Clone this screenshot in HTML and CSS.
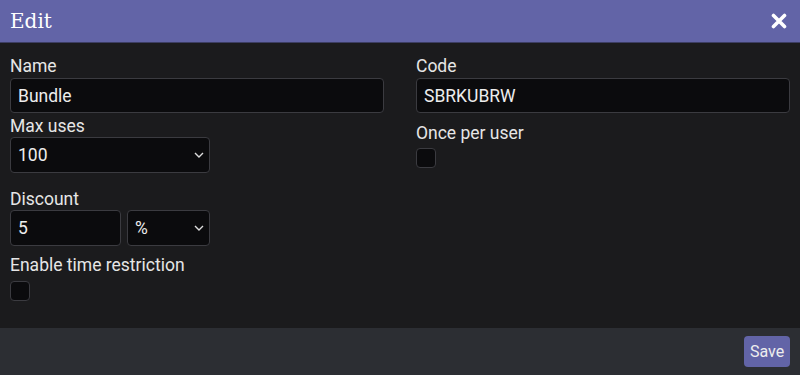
FILE: index.html
```
<!DOCTYPE html>
<html lang="en">
    <head>
        <meta charset="UTF-8" />
        <meta name="viewport" content="width=device-width, initial-scale=1.0" />
        <title>Edit</title>
        <link rel="stylesheet" href="styles.css">
    </head>
    <body>
        <!-- 모달 박스 -->
        <div class="modal">
            <!-- 헤더 -->
            <div class="modal-head">
                <h1 class="modal-tit">Edit</h1>
                <button class="close-btn" aria-label="close">
                    <svg width="16" height="16" viewBox="0 0 16 16">
                        <path d="M2.5 2.5 L13.5 13.5 M13.5 2.5 L2.5 13.5" stroke="#fff" stroke-width="3.6" stroke-linecap="round" />
                    </svg>
                </button>
            </div>

            <!-- 폼 본문 -->
            <div class="modal-body">
                <div class="col">
                    <label class="lbl lbl-first" for="name">Name</label>
                    <input class="fld" type="text" id="name" value="Bundle" />

                    <label class="lbl lbl-max" for="maxuse">Max uses</label>
                    <div class="sel-wrap sel-max">
                        <select class="fld sel" id="maxuse">
                            <option>100</option>
                        </select>
                        <svg class="chev" width="10" height="6" viewBox="0 0 10 6">
                            <path d="M1 1 L5 5 L9 1" fill="none" stroke="#ddd" stroke-width="1.4" />
                        </svg>
                    </div>

                    <label class="lbl lbl-disc" for="disc">Discount</label>
                    <div class="disc-row">
                        <input class="fld fld-disc" type="text" id="disc" value="5" />
                        <div class="sel-wrap sel-unit">
                            <select class="fld sel">
                                <option>%</option>
                            </select>
                            <svg class="chev" width="10" height="6" viewBox="0 0 10 6">
                                <path d="M1 1 L5 5 L9 1" fill="none" stroke="#ddd" stroke-width="1.4" />
                            </svg>
                        </div>
                    </div>

                    <label class="lbl lbl-time" for="timechk">Enable time restriction</label>
                    <input class="chk chk-time" type="checkbox" id="timechk" />
                </div>

                <div class="col">
                    <label class="lbl lbl-first" for="code">Code</label>
                    <input class="fld" type="text" id="code" value="SBRKUBRW" />

                    <label class="lbl lbl-once" for="once">Once per user</label>
                    <input class="chk chk-once" type="checkbox" id="once" />
                </div>
            </div>

            <!-- 푸터 -->
            <div class="modal-foot">
                <button class="save-btn">Save</button>
            </div>
        </div>
    </body>
</html>
```

FILE: styles.css
```
html,
body {
    margin: 0;
    height: 100%;
}
body {
    background-color: #1b1b1d;
    color: #e6e6e6;
    font-family: Roboto, "Noto Sans", sans-serif;
    font-size: 17.5px;
}
/* 모달 전체 */
.modal {
    display: flex;
    flex-direction: column;
    height: 100%;
}
/* 헤더 */
.modal-head {
    display: flex;
    align-items: center;
    justify-content: space-between;
    height: 42px;
    padding: 0 10px;
    background-color: #6264a7;
    border-bottom: 1px solid #3d3e63;
}
.modal-tit {
    margin: 0;
    font-family: "DejaVu Serif", "Liberation Serif", serif;
    font-weight: normal;
    font-size: 20px;
    color: #fff;
}
.close-btn {
    display: flex;
    padding: 0;
    margin-right: 3px;
    border: 0;
    background: none;
}
/* 본문 */
.modal-body {
    flex: 1;
    display: grid;
    grid-template-columns: 1fr 1fr;
    column-gap: 32px;
    padding: 0 10px;
}
.col {
    display: flex;
    flex-direction: column;
    align-items: flex-start;
}
.lbl {
    display: block;
    line-height: 21px;
}
.lbl-first {
    margin-top: 13px;
    margin-bottom: 1px;
}
.lbl-max {
    margin-top: 3px;
}
.lbl-disc {
    margin-top: 16px;
}
.lbl-time {
    margin-top: 9px;
    margin-bottom: 5px;
}
.lbl-once {
    margin-top: 10px;
    margin-bottom: 4px;
}
/* 입력요소 */
.fld {
    box-sizing: border-box;
    width: 100%;
    height: 35px;
    margin: 0;
    padding: 0 7px;
    background-color: #0b0b0d;
    border: 1px solid #3b3b40;
    border-radius: 4px;
    color: #ededed;
    font-family: Roboto, "Noto Sans", sans-serif;
    font-size: 17.5px;
    outline: none;
}
.sel-wrap {
    position: relative;
}
.sel {
    height: 36px;
    appearance: none;
    -webkit-appearance: none;
}
.chev {
    position: absolute;
    right: 6px;
    top: 15px;
    pointer-events: none;
}
.sel-max {
    width: 200px;
}
.disc-row {
    display: flex;
    gap: 6px;
}
.fld-disc {
    width: 111px;
    height: 36px;
}
.sel-unit {
    width: 83px;
}
/* 체크박스 */
.chk {
    box-sizing: border-box;
    width: 20px;
    height: 20px;
    margin: 0;
    appearance: none;
    -webkit-appearance: none;
    background-color: #0b0b0d;
    border: 1px solid #3b3b40;
    border-radius: 4px;
}
/* 푸터 */
.modal-foot {
    display: flex;
    justify-content: flex-end;
    align-items: center;
    height: 47px;
    padding: 0 10px;
    background-color: #2c2e33;
}
.save-btn {
    width: 46px;
    height: 31px;
    padding: 0;
    border: 0;
    border-radius: 4px;
    background-color: #6264a7;
    color: #eee;
    font-family: Roboto, "Noto Sans", sans-serif;
    font-size: 16px;
}
```
